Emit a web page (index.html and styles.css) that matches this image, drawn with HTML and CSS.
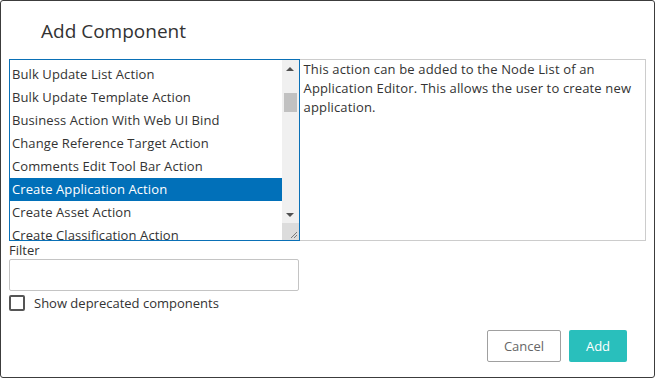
FILE: index.html
```html
<!DOCTYPE html>
<html lang="en">
<head>
    <meta charset="UTF-8">
    <title>Add Component</title>
    <link rel="stylesheet" href="styles.css">
</head>
<body>
    <div class="dialog">
        <h2 class="title">Add Component</h2>

        <div class="picker">
            <div class="list">
                <div class="items">
                    <div class="item">Bulk Update List Action</div>
                    <div class="item">Bulk Update Template Action</div>
                    <div class="item">Business Action With Web UI Bind</div>
                    <div class="item">Change Reference Target Action</div>
                    <div class="item">Comments Edit Tool Bar Action</div>
                    <div class="item selected">Create Application Action</div>
                    <div class="item">Create Asset Action</div>
                    <div class="item">Create Classification Action</div>
                </div>
                <div class="scrollbar">
                    <div class="arrow up"></div>
                    <div class="track"><div class="thumb"></div></div>
                    <div class="arrow down"></div>
                    <div class="grip">
                        <svg width="17" height="17" viewBox="0 0 17 17">
                            <path d="M15 9 L9 15 M15 12 L12 15" stroke="#7a7a7a" stroke-width="1" fill="none"/>
                        </svg>
                    </div>
                </div>
            </div>
            <div class="description">
                This action can be added to the Node List of an Application Editor. This allows the user to create new application.
            </div>
        </div>

        <label class="filter-label" for="filter">Filter</label>
        <input class="filter" id="filter" type="text">

        <label class="check">
            <span class="box"></span>
            <span>Show deprecated components</span>
        </label>

        <div class="footer">
            <button class="btn cancel">Cancel</button>
            <button class="btn add">Add</button>
        </div>
    </div>
</body>
</html>
```

FILE: styles.css
```css
body {
    margin: 0;
    font-family: 'Open Sans', 'Noto Sans', sans-serif;
    color: #333333;
    background: #ffffff;
}

.dialog {
    width: 655px;
    height: 378px;
    box-sizing: border-box;
    border: 1px solid #3c3c3c;
    border-radius: 3px;
    padding: 0 8px;
    display: flex;
    flex-direction: column;
}

.title {
    margin: 0;
    padding: 16px 0 0 32px;
    height: 42px;
    font-size: 19px;
    font-weight: normal;
    line-height: 28px;
    color: #333333;
}

.picker {
    display: flex;
    height: 182px;
}

.list {
    width: 291px;
    box-sizing: border-box;
    border: 1px solid #0a70b6;
    display: flex;
    overflow: hidden;
}

.items {
    flex: 1;
    padding-top: 3px;
    overflow: hidden;
}

.item {
    height: 23px;
    line-height: 22px;
    padding-left: 2px;
    font-size: 13px;
    letter-spacing: 0.1px;
    white-space: nowrap;
}

.item.selected {
    background: #0170b9;
    color: #ffffff;
}

.scrollbar {
    width: 17px;
    background: #f0f0f0;
    display: flex;
    flex-direction: column;
}

.arrow {
    height: 17px;
    display: flex;
    align-items: center;
    justify-content: center;
}

.arrow::before {
    content: '';
    border-left: 4px solid transparent;
    border-right: 4px solid transparent;
}

.arrow.up::before {
    border-bottom: 4px solid #505050;
}

.arrow.down::before {
    border-top: 4px solid #505050;
}

.track {
    flex: 1;
    padding: 16px 2px 0;
}

.thumb {
    height: 19px;
    background: #c1c1c1;
}

.grip {
    height: 17px;
    background: #dcdcdc;
}

.grip svg {
    display: block;
}

.description {
    width: 347px;
    box-sizing: border-box;
    border: 1px solid #cccccc;
    border-left: none;
    padding: 0 4px;
    font-size: 13px;
    letter-spacing: 0.15px;
    line-height: 19px;
}

.filter-label {
    font-size: 13px;
    line-height: 18px;
}

.filter {
    width: 290px;
    height: 32px;
    box-sizing: border-box;
    margin: 0;
    border: 1px solid #c4c4c4;
    border-radius: 2px;
}

.check {
    display: flex;
    align-items: center;
    gap: 9px;
    margin-top: 4px;
    font-size: 13px;
    line-height: 16px;
}

.box {
    width: 16px;
    height: 16px;
    box-sizing: border-box;
    border: 2px solid #555555;
    border-radius: 2px;
}

.footer {
    margin-top: auto;
    margin-bottom: 15px;
    padding-right: 19px;
    display: flex;
    justify-content: flex-end;
    gap: 8px;
}

.btn {
    height: 32px;
    border-radius: 2px;
    font-family: inherit;
    font-size: 13px;
    cursor: pointer;
}

.btn.cancel {
    width: 74px;
    background: #ffffff;
    border: 1px solid #a0a0a0;
    color: #666666;
}

.btn.add {
    width: 58px;
    background: #29bfbc;
    border: none;
    color: #ffffff;
}
```
